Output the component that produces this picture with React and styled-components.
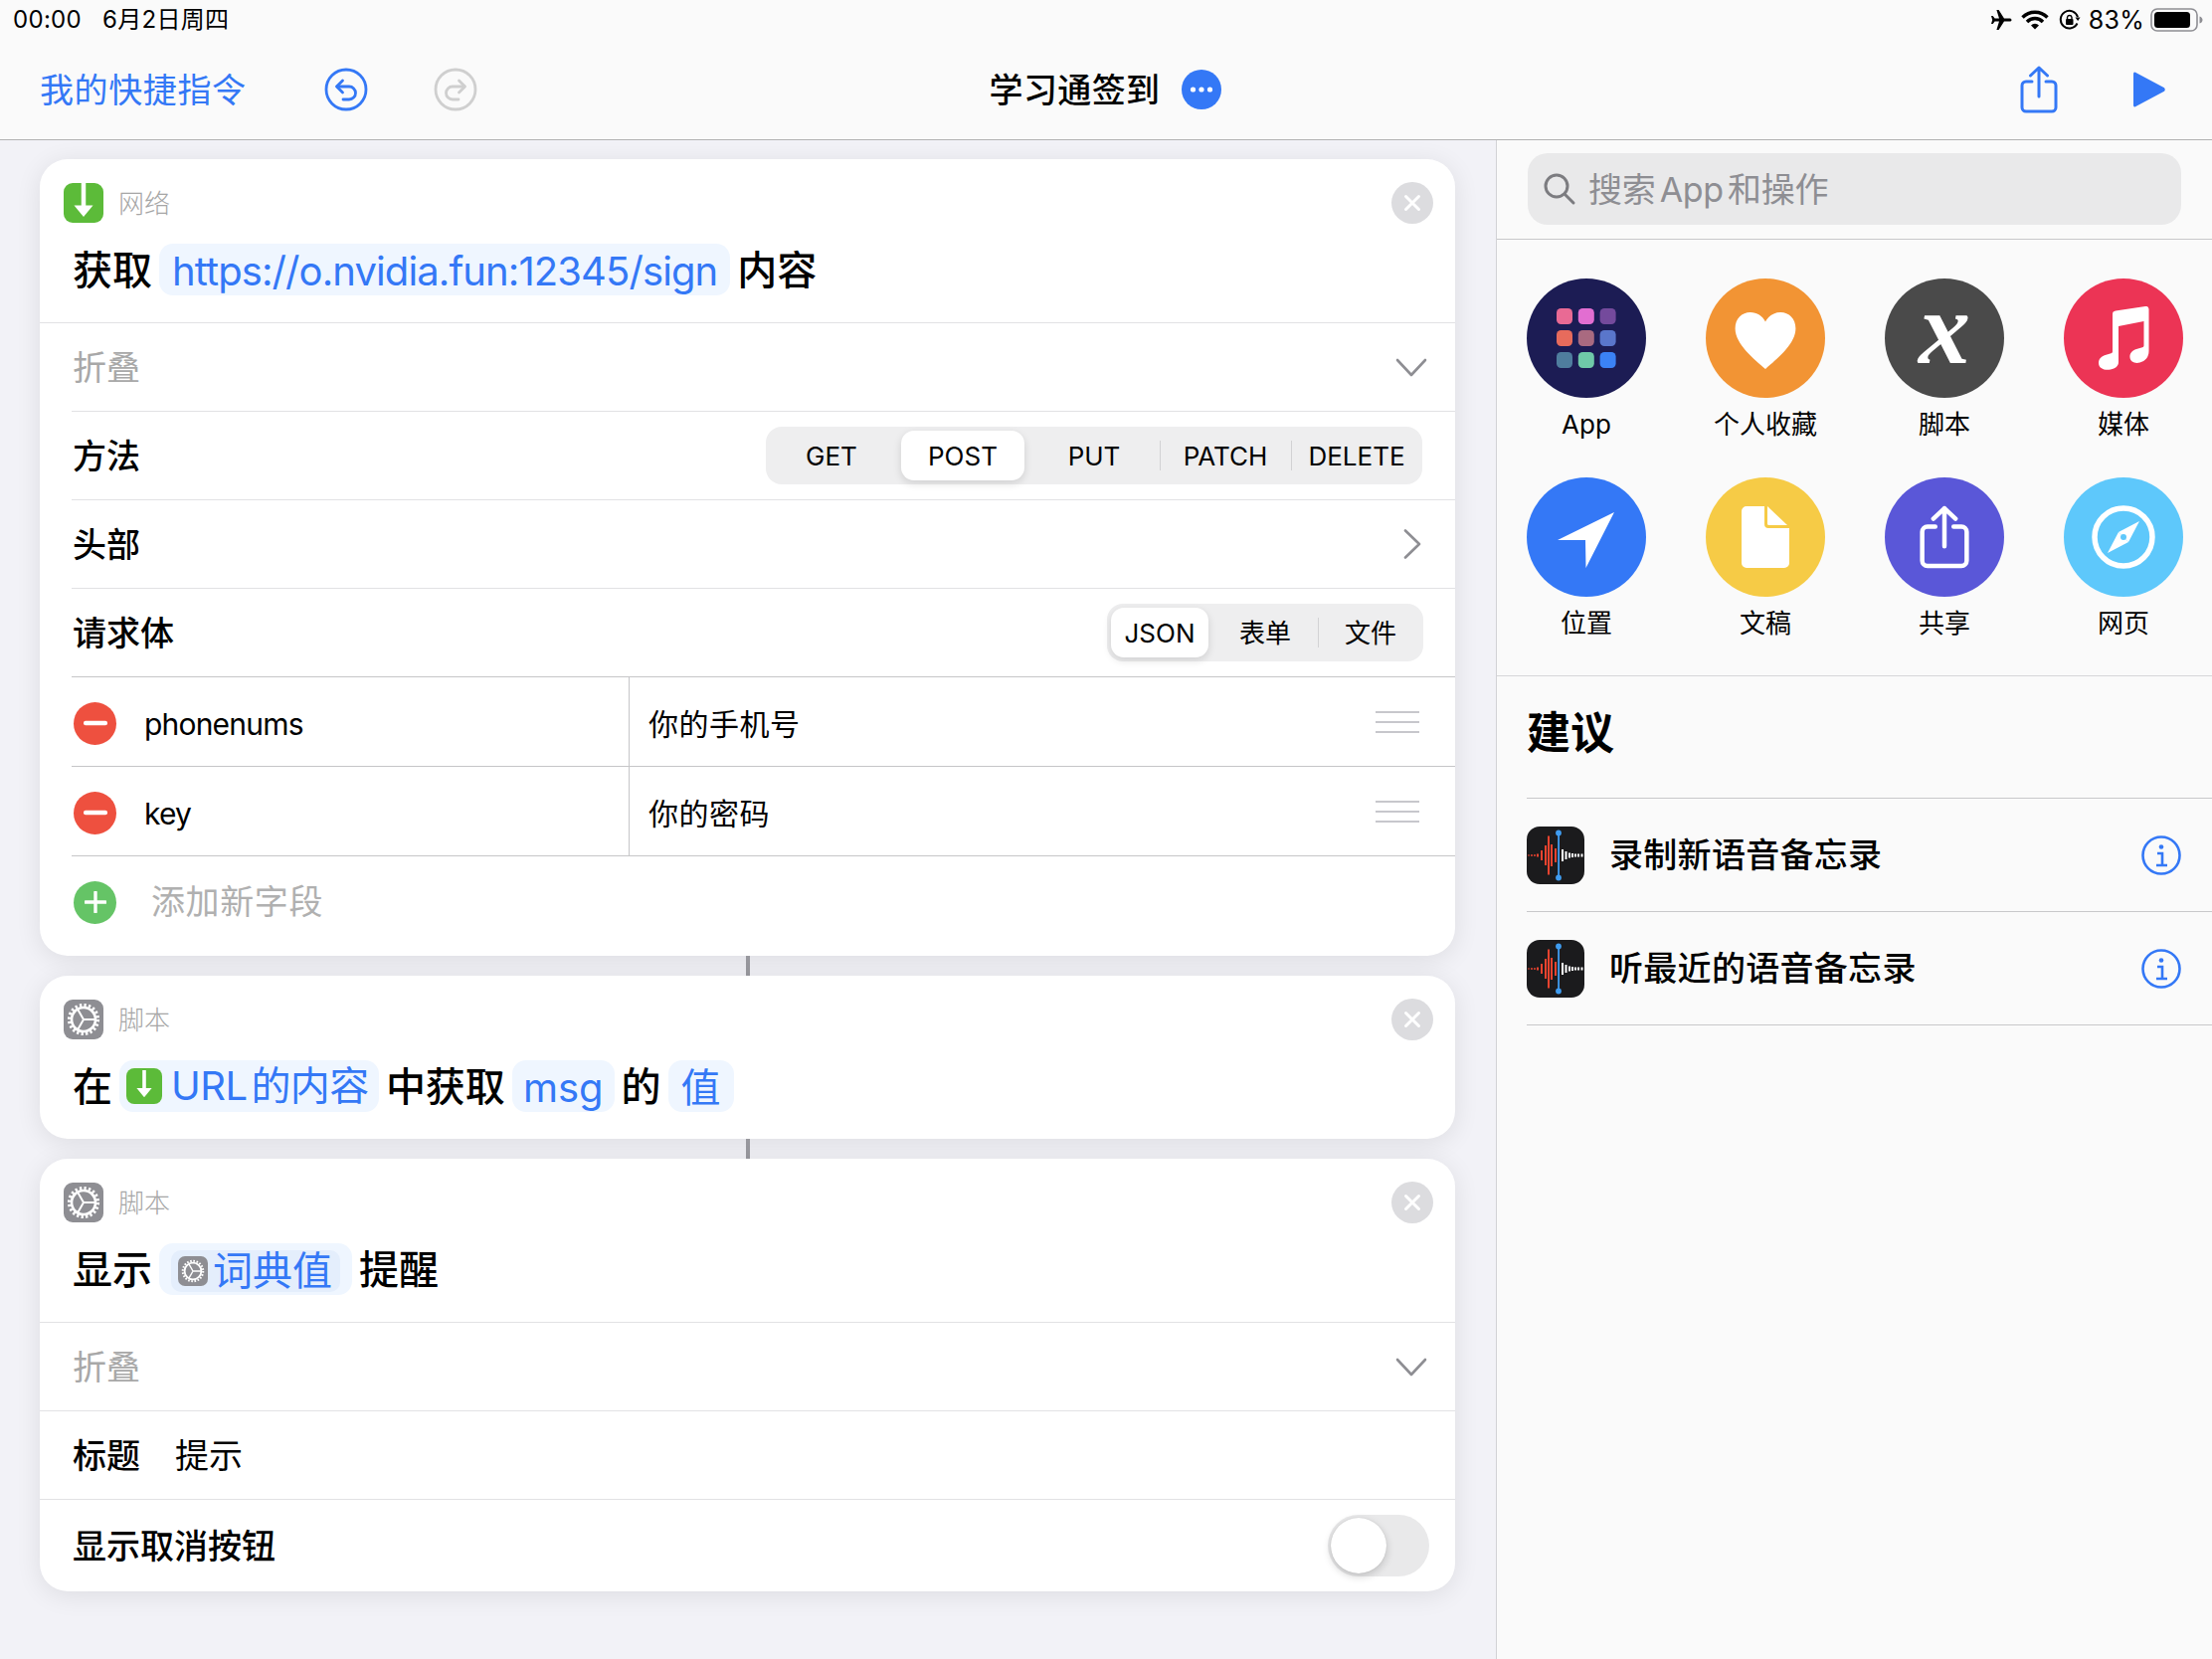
import React from 'react';
import styled, { createGlobalStyle } from 'styled-components';

const BLUE = '#3478f6';

const GlobalStyle = createGlobalStyle`
  html, body {
    margin: 0;
    padding: 0;
    background: #f2f2f7;
  }
  body {
    font-family: Inter, "Noto Sans CJK SC", sans-serif;
    line-height: 1.3;
    color: #000;
  }
  * { box-sizing: border-box; }
`;

const Page = styled.div`
  width: 2224px;
  height: 1668px;
  display: flex;
  flex-direction: column;
  overflow: hidden;
`;

/* top bars */
const Top = styled.header`
  height: 141px;
  background: #fafafa;
  border-bottom: 1px solid #b2b2b2;
  flex-shrink: 0;
`;
const StatusBar = styled.div`
  height: 40px;
  display: flex;
  align-items: center;
  justify-content: space-between;
  padding: 0 8px 0 13px;
  font-size: 24px;
  letter-spacing: 0.3px;
`;
const StatusLeft = styled.div`
  display: flex;
  gap: 21px;
`;
const StatusRight = styled.div`
  display: flex;
  align-items: center;
`;
const Battery = styled.span`
  font-size: 25px;
`;
const NavBar = styled.div`
  height: 100px;
  display: grid;
  grid-template-columns: 1fr auto 1fr;
  align-items: center;
  padding: 0 47px 0 40px;
`;
const NavLeft = styled.div`
  display: flex;
  align-items: center;
`;
const BackLink = styled.span`
  font-size: 34px;
  letter-spacing: 0.6px;
  color: ${BLUE};
  margin-right: 78px;
  padding-top: 2px;
`;
const NavCenter = styled.div`
  display: flex;
  align-items: center;
  gap: 21px;
  margin-left: 5px;
  font-size: 34px;
  font-weight: 500;
  letter-spacing: 0.4px;
`;
const NavTitle = styled.span`
  padding-top: 2px;
`;
const NavRight = styled.div`
  display: flex;
  align-items: center;
  justify-content: flex-end;
  gap: 76px;
`;
const UndoButton = styled.svg`
  width: 44px;
  height: 44px;
  margin-right: ${({ $gap }) => $gap || 0}px;
  flex-shrink: 0;
`;

/* main */
const Main = styled.div`
  flex: 1;
  display: flex;
  min-height: 0;
`;
const Editor = styled.section`
  width: 1504px;
  padding: 19px 41px 0 40px;
  display: flex;
  flex-direction: column;
  background: #f2f2f7;
`;
const Card = styled.div`
  background: #fff;
  border-radius: 28px;
  box-shadow: 0 4px 26px rgba(0, 0, 0, 0.09);
  overflow: hidden;
  flex-shrink: 0;
`;
const Connector = styled.div`
  width: 4px;
  height: 20px;
  margin: 0 auto;
  background: #98989e;
`;
const CardHead = styled.div`
  display: flex;
  align-items: center;
  height: 64px;
  padding: 24px 22px 0 24px;
`;
const CategoryIcon = styled.div`
  width: 40px;
  height: 40px;
  flex-shrink: 0;
  border-radius: 9px;
  background: ${({ $bg }) => $bg};
  display: flex;
  align-items: center;
  justify-content: center;
`;
const CategoryName = styled.span`
  font-size: 26px;
  color: #a6a6a6;
  margin-left: 15px;
  padding-top: 2px;
  flex: 1;
  font-weight: 300;
`;
const CloseButton = styled.div`
  width: 42px;
  height: 42px;
  margin: -1px 0;
  border-radius: 50%;
  background: #dcdcdf;
  display: flex;
  align-items: center;
  justify-content: center;
`;
const Sentence = styled.div`
  height: 100px;
  display: flex;
  align-items: flex-start;
  gap: 7px;
  padding: 21px 0 0 33px;
  font-size: 40px;
  line-height: 52px;
  font-weight: 500;
`;
const Word = styled.span`
  padding-top: 1px;
`;
const Chip = styled.span`
  display: inline-flex;
  align-items: center;
  height: 52px;
  padding: 3px ${({ $pad }) => $pad ?? 13}px 0;
  border-radius: 14px;
  background: #eff6ff;
  color: ${BLUE};
  font-weight: 400;
  letter-spacing: ${({ $tight }) => ($tight ? '-0.9px' : '0')};
  gap: 9px;
`;
const IconChip = styled(Chip)`
  padding: 0 10px 0 7px;
  word-spacing: -7px;
  letter-spacing: -0.5px;
`;
const InnerChip = styled.span`
  display: inline-flex;
  align-items: center;
  height: 42px;
  padding: 0 8px 0 7px;
  gap: 5px;
  border-radius: 10px;
  background: #e4eefc;
`;
const InlineIcon = styled.span`
  width: ${({ $size }) => $size}px;
  height: ${({ $size }) => $size}px;
  border-radius: ${({ $size }) => Math.round($size / 4.4)}px;
  background: ${({ $bg }) => $bg};
  display: flex;
  align-items: center;
  justify-content: center;
  flex-shrink: 0;
`;
const Row = styled.div`
  height: ${({ $h }) => $h || 89}px;
  margin-left: ${({ $inset }) => ($inset ? 32 : 0)}px;
  padding-left: ${({ $inset }) => ($inset ? 1 : 33)}px;
  padding-right: ${({ $pr }) => $pr ?? 28}px;
  border-top: 1px solid #e2e2e4;
  display: flex;
  align-items: center;
  justify-content: space-between;
  font-size: 34px;
`;
const Muted = styled.span`
  color: #a8a8a8;
  margin-top: 3px;
`;
const RowLabel = styled.span`
  font-weight: 500;
  margin-top: 3px;
`;
const TitleValue = styled.span`
  margin: 3px 0 0 35px;
  font-weight: 400;
`;
const Group = styled.div`
  display: flex;
  align-items: center;
`;
const ChevronBox = styled.span`
  display: flex;
  margin-top: 2px;
`;
const Segmented = styled.div`
  display: flex;
  height: 58px;
  border-radius: 16px;
  background: #eeeeef;
  font-size: 26px;
`;
const Segment = styled.div`
  position: relative;
  width: ${({ $w }) => $w}px;
  padding-top: 1px;
  display: flex;
  align-items: center;
  justify-content: center;
  &::before {
    content: '';
    display: ${({ $divider }) => ($divider ? 'block' : 'none')};
    position: absolute;
    left: 0;
    top: 14px;
    bottom: 14px;
    width: 1px;
    background: #d2d2d4;
  }
`;
const ActiveSegment = styled(Segment)`
  background: #fff;
  border-radius: 13px;
  margin: 4px;
  width: ${({ $w }) => $w - 8}px;
  box-shadow: 0 3px 8px rgba(0, 0, 0, 0.13);
`;
const FieldRow = styled.div`
  height: 90px;
  margin-left: 32px;
  border-top: 1px solid #c6c6c8;
  display: flex;
  font-size: 30px;
`;
const FieldKey = styled.div`
  width: 560px;
  padding: 3px 0 0 2px;
  display: flex;
  align-items: center;
  gap: 28px;
  flex-shrink: 0;
`;
const KeyText = styled.span`
  letter-spacing: -0.8px;
  margin-top: 2px;
`;
const FieldValue = styled.div`
  flex: 1;
  border-left: 1px solid #c6c6c8;
  padding: 0 36px 0 19px;
  display: flex;
  align-items: center;
  justify-content: space-between;
`;
const ValueText = styled.span`
  letter-spacing: 0.5px;
  margin-top: 5px;
`;
const RoundIcon = styled.span`
  width: 43px;
  height: 43px;
  border-radius: 50%;
  background: ${({ $bg }) => $bg};
  display: flex;
  align-items: center;
  justify-content: center;
  flex-shrink: 0;
`;
const Handle = styled.span`
  width: 44px;
  height: 22px;
  display: flex;
  flex-direction: column;
  justify-content: space-between;
  span {
    height: 2px;
    background: #c7c7cc;
  }
`;
const AddRow = styled.div`
  height: 101px;
  margin-left: 32px;
  padding: 25px 0 33px 2px;
  border-top: 1px solid #c6c6c8;
  display: flex;
  align-items: center;
  gap: 35px;
  font-size: 34px;
  letter-spacing: 0.6px;
  color: #b0b0b0;
`;
const Toggle = styled.div`
  width: 102px;
  height: 62px;
  border-radius: 31px;
  background: #e9e9ea;
  padding: 3px;
  margin-right: -2px;
`;
const Knob = styled.div`
  width: 56px;
  height: 56px;
  border-radius: 50%;
  background: #fff;
  box-shadow: 0 3px 8px rgba(0, 0, 0, 0.18), 0 0 1px rgba(0, 0, 0, 0.2);
`;

/* sidebar */
const Sidebar = styled.aside`
  flex: 1;
  background: #fafafa;
  border-left: 1px solid #d2d2d6;
  display: flex;
  flex-direction: column;
`;
const SearchSection = styled.div`
  height: 100px;
  padding: 13px 31px 0 31px;
  border-bottom: 1px solid #c8c8ca;
`;
const SearchField = styled.div`
  height: 72px;
  border-radius: 20px;
  background: #e9e9ea;
  display: flex;
  align-items: center;
  gap: 11px;
  padding-left: 14px;
  font-size: 34px;
  word-spacing: -5px;
  letter-spacing: -0.3px;
  color: #8e8e93;
`;
const SearchText = styled.span`
  padding-top: 2px;
`;
const IconGrid = styled.div`
  height: 439px;
  padding: 39px 0 0 30px;
  display: grid;
  grid-template-columns: repeat(4, 120px);
  grid-auto-rows: 200px;
  column-gap: 60px;
  border-bottom: 1px solid #d6d6d8;
`;
const Tile = styled.div`
  display: flex;
  flex-direction: column;
  align-items: center;
  font-size: 26px;
  gap: 10px;
`;
const TileCircle = styled.div`
  width: 120px;
  height: 120px;
  border-radius: 50%;
  background: ${({ $bg }) => $bg};
  display: flex;
  align-items: center;
  justify-content: center;
  flex-shrink: 0;
`;
const ScriptX = styled.span`
  font-family: "Liberation Serif", serif;
  font-style: italic;
  font-weight: 700;
  font-size: 104px;
  line-height: 1;
  color: #fff;
  margin-top: -20px;
`;
const TileGlyph = styled.svg`
  margin-top: ${({ $dy }) => $dy || 0}px;
`;
const SectionTitle = styled.h2`
  margin: 0;
  height: 122px;
  padding: 29px 0 0 30px;
  font-size: 44px;
  line-height: 56px;
  font-weight: 700;
`;
const SuggestList = styled.div`
  margin-left: 30px;
  border-bottom: 1px solid #c8c8ca;
`;
const SuggestRow = styled.div`
  height: 114px;
  border-top: 1px solid #c8c8ca;
  display: flex;
  align-items: center;
  padding-right: 31px;
  font-size: 34px;
  font-weight: 500;
`;
const SuggestText = styled.span`
  flex: 1;
  margin: 2px 0 0 25px;
  letter-spacing: 0.3px;
`;

/* drawings */
const DownloadGlyph = ({ size = 40 }) => (
  <svg width={size} height={size} viewBox="0 0 40 40">
    <path d="M20 0v30" stroke="#fff" strokeWidth="4.5" />
    <path d="M10.5 22.5h19L20 34z" fill="#fff" />
  </svg>
);

const GearGlyph = ({ size = 40 }) => (
  <svg width={size} height={size} viewBox="0 0 40 40" fill="none" stroke="#fff">
    <circle cx="20" cy="20" r="12" strokeWidth="2.6" />
    <circle cx="20" cy="20" r="14.6" strokeWidth="3" strokeDasharray="2.3 2.29" />
    <path d="M20 20h12M20 20l-6 -10.4M20 20l-6 10.4" strokeWidth="2" />
  </svg>
);

const CloseGlyph = () => (
  <svg width="20" height="20" viewBox="0 0 20 20">
    <path d="M3.5 3.5l13 13M16.5 3.5l-13 13" stroke="#fff" strokeWidth="3" strokeLinecap="round" />
  </svg>
);

const Chevron = ({ dir }) =>
  dir === 'down' ? (
    <ChevronBox>
      <svg width="32" height="20" viewBox="0 0 32 20" fill="none">
        <path d="M2 2l14 15L30 2" stroke="#8e8e93" strokeWidth="2.6" strokeLinecap="round" strokeLinejoin="round" />
      </svg>
    </ChevronBox>
  ) : (
    <svg width="20" height="30" viewBox="0 0 20 30" fill="none">
      <path d="M3 1.5L17 15 3 28.5" stroke="#8e8e93" strokeWidth="2.6" strokeLinecap="round" strokeLinejoin="round" />
    </svg>
  );

const MinusGlyph = () => (
  <svg width="24" height="6" viewBox="0 0 24 6">
    <rect width="24" height="4.5" y="0.7" rx="2" fill="#fff" />
  </svg>
);

const PlusGlyph = () => (
  <svg width="22" height="22" viewBox="0 0 22 22">
    <path d="M11 1v20M1 11h20" stroke="#fff" strokeWidth="3.4" strokeLinecap="round" />
  </svg>
);

const ShareGlyph = ({ color, w = 38, h = 48, sw = 3 }) => (
  <svg width={w} height={h} viewBox="0 0 38 48" fill="none" stroke={color} strokeWidth={sw} strokeLinecap="round" strokeLinejoin="round">
    <path d="M19 2v29M10.5 10L19 2l8.5 8" />
    <path d="M12 16H6a4 4 0 0 0-4 4v22a4 4 0 0 0 4 4h26a4 4 0 0 0 4-4V20a4 4 0 0 0-4-4h-6" />
  </svg>
);

const VoiceMemoIcon = () => {
  const red = [[1, 1], [4, 1.5], [7, 1.5], [10, 3], [14, 10], [18, 20], [21, 39], [24, 22], [28, 14]];
  const white = [[35, 12], [38.5, 8], [42, 5], [45, 4], [48, 3], [51, 3], [54.5, 3]];
  return (
    <svg width="58" height="58" viewBox="0 0 58 58">
      <rect width="58" height="58" rx="13" fill="#1b1b1d" />
      {red.map(([x, h]) => (
        <rect key={x} x={x} y={29 - h / 2} width="2" height={h} fill="#e8432f" />
      ))}
      {white.map(([x, h]) => (
        <rect key={x} x={x} y={29 - h / 2} width="2" height={h} fill="#fff" />
      ))}
      <rect x="31.2" y="6" width="1.8" height="46" fill="#3f9cf0" />
      <circle cx="32" cy="6.5" r="2.9" fill="#3f9cf0" />
      <circle cx="32" cy="51.5" r="2.9" fill="#3f9cf0" />
    </svg>
  );
};

const InfoGlyph = () => (
  <svg width="40" height="40" viewBox="0 0 40 40" fill="none" stroke={BLUE}>
    <circle cx="20" cy="20" r="18.5" strokeWidth="2.6" />
    <circle cx="20" cy="11.5" r="2.3" fill={BLUE} stroke="none" />
    <path d="M16 18h5v12M15 30h11" strokeWidth="2.6" />
  </svg>
);

const AppGrid = () => {
  const colors = ['#e96a94', '#e26ed1', '#744a9c', '#e76b5c', '#a96a80', '#5a76cb', '#4f7d9e', '#6fc9a8', '#3b82f6'];
  return (
    <svg width="60" height="60" viewBox="0 0 60 60">
      {colors.map((c, i) => (
        <rect key={c} x={(i % 3) * 21.8} y={Math.floor(i / 3) * 22} width="16" height="16" rx="4.5" fill={c} />
      ))}
    </svg>
  );
};

const App = () => (
  <Page>
    <GlobalStyle />
    <Top>
      <StatusBar>
        <StatusLeft>
          <span>00:00</span>
          <span>6月2日周四</span>
        </StatusLeft>
        <StatusRight>
          <svg width="22" height="22" viewBox="0 0 22 22" style={{ marginRight: 9 }}>
            <path d="M21.5 11c0-1-1-1.6-2-1.6H14L8.6 1H6.4L9 9.4H4.6L2.7 7H1l1.2 4L1 15h1.7l1.9-2.4H9L6.4 21h2.2l5.4-8.4h5.5c1 0 2-.6 2-1.6z" fill="#000" />
          </svg>
          <svg width="28" height="20" viewBox="0 0 28 20" style={{ marginRight: 10 }} fill="none" stroke="#000" strokeWidth="3.4">
            <path d="M1.5 7.5a17.5 17.5 0 0 1 25 0" />
            <path d="M6 12a11 11 0 0 1 16 0" />
            <path d="M14 19.5l-4-4a5.6 5.6 0 0 1 8 0z" fill="#000" stroke="none" />
          </svg>
          <svg width="22" height="22" viewBox="0 0 22 22" style={{ marginRight: 8 }} fill="none" stroke="#000" strokeWidth="2">
            <path d="M18.5 14.5A8.8 8.8 0 1 1 19 8" />
            <path d="M21.5 8.5h-5l2.6 3.4z" fill="#000" stroke="none" />
            <rect x="7" y="10" width="7.5" height="6" rx="1" fill="#000" stroke="none" />
            <path d="M8.5 10V8.3a2.3 2.3 0 0 1 4.5 0V10" strokeWidth="1.4" />
          </svg>
          <Battery>83%</Battery>
          <svg width="54" height="26" viewBox="0 0 54 26" style={{ marginLeft: 6 }}>
            <rect x="1" y="2" width="46" height="22" rx="6" fill="none" stroke="#8e8e93" strokeWidth="1.6" />
            <rect x="4" y="5" width="36" height="16" rx="3.5" fill="#000" />
            <path d="M49.5 9.5c2 .5 3 2 3 3.500s-1 3-3 3.500z" fill="#8e8e93" />
          </svg>
        </StatusRight>
      </StatusBar>
      <NavBar>
        <NavLeft>
          <BackLink>我的快捷指令</BackLink>
          <UndoButton $gap={66} viewBox="0 0 44 44" fill="none" stroke={BLUE} strokeWidth="2.8" strokeLinecap="round" strokeLinejoin="round">
            <circle cx="22" cy="22" r="20" />
            <path d="M18.5 13l-6 6 6 6" />
            <path d="M13 19h12a6.5 6.5 0 0 1 0 13h-6" />
          </UndoButton>
          <UndoButton viewBox="0 0 44 44" fill="none" stroke="#cfcfcf" strokeWidth="2.8" strokeLinecap="round" strokeLinejoin="round">
            <circle cx="22" cy="22" r="20" />
            <path d="M25.5 13l6 6-6 6" />
            <path d="M31 19H19a6.5 6.5 0 0 0 0 13h6" />
          </UndoButton>
        </NavLeft>
        <NavCenter>
          <NavTitle>学习通签到</NavTitle>
          <svg width="40" height="40" viewBox="0 0 40 40">
            <circle cx="20" cy="20" r="20" fill={BLUE} />
            <circle cx="11.5" cy="20" r="2.6" fill="#fff" />
            <circle cx="20" cy="20" r="2.6" fill="#fff" />
            <circle cx="28.5" cy="20" r="2.6" fill="#fff" />
          </svg>
        </NavCenter>
        <NavRight>
          <ShareGlyph color={BLUE} />
          <svg width="32" height="36" viewBox="0 0 32 36">
            <path d="M2 0.8L31 16.2q1.5 1.8 0 3.6L2 35.2Q0 36 0 33.5V2.500Q0 0 2 0.8z" fill={BLUE} />
          </svg>
        </NavRight>
      </NavBar>
    </Top>
    <Main>
      <Editor>
        <Card>
          <CardHead>
            <CategoryIcon $bg="#5cbb39"><DownloadGlyph /></CategoryIcon>
            <CategoryName>网络</CategoryName>
            <CloseButton><CloseGlyph /></CloseButton>
          </CardHead>
          <Sentence>
            <Word>获取</Word>
            <Chip $tight>https://o.nvidia.fun:12345/sign</Chip>
            <Word>内容</Word>
          </Sentence>
          <Row>
            <Muted>折叠</Muted>
            <Chevron dir="down" />
          </Row>
          <Row $inset $pr={33}>
            <RowLabel>方法</RowLabel>
            <Segmented>
              <Segment $w={132}>GET</Segment>
              <ActiveSegment $w={132}>POST</ActiveSegment>
              <Segment $w={132}>PUT</Segment>
              <Segment $w={132} $divider>PATCH</Segment>
              <Segment $w={132} $divider>DELETE</Segment>
            </Segmented>
          </Row>
          <Row $inset $pr={33}>
            <RowLabel>头部</RowLabel>
            <Chevron dir="right" />
          </Row>
          <Row $inset $pr={32}>
            <RowLabel>请求体</RowLabel>
            <Segmented>
              <ActiveSegment $w={106}>JSON</ActiveSegment>
              <Segment $w={106}>表单</Segment>
              <Segment $w={106} $divider>文件</Segment>
            </Segmented>
          </Row>
          <FieldRow>
            <FieldKey>
              <RoundIcon $bg="#ee503f"><MinusGlyph /></RoundIcon>
              <KeyText>phonenums</KeyText>
            </FieldKey>
            <FieldValue>
              <ValueText>你的手机号</ValueText>
              <Handle><span /><span /><span /></Handle>
            </FieldValue>
          </FieldRow>
          <FieldRow>
            <FieldKey>
              <RoundIcon $bg="#ee503f"><MinusGlyph /></RoundIcon>
              <KeyText>key</KeyText>
            </FieldKey>
            <FieldValue>
              <ValueText>你的密码</ValueText>
              <Handle><span /><span /><span /></Handle>
            </FieldValue>
          </FieldRow>
          <AddRow>
            <RoundIcon $bg="#65c466"><PlusGlyph /></RoundIcon>
            <span>添加新字段</span>
          </AddRow>
        </Card>
        <Connector />
        <Card>
          <CardHead>
            <CategoryIcon $bg="#8e8e93"><GearGlyph /></CategoryIcon>
            <CategoryName>脚本</CategoryName>
            <CloseButton><CloseGlyph /></CloseButton>
          </CardHead>
          <Sentence>
            <Word>在</Word>
            <IconChip>
              <InlineIcon $size={36} $bg="#5cbb39"><DownloadGlyph size={32} /></InlineIcon>
              <span>URL 的内容</span>
            </IconChip>
            <Word>中获取</Word>
            <Chip $pad={11}>msg</Chip>
            <Word>的</Word>
            <Chip>值</Chip>
          </Sentence>
        </Card>
        <Connector />
        <Card>
          <CardHead>
            <CategoryIcon $bg="#8e8e93"><GearGlyph /></CategoryIcon>
            <CategoryName>脚本</CategoryName>
            <CloseButton><CloseGlyph /></CloseButton>
          </CardHead>
          <Sentence>
            <Word>显示</Word>
            <Chip $pad={12}>
              <InnerChip>
                <InlineIcon $size={30} $bg="#8e8e93"><GearGlyph size={28} /></InlineIcon>
                <span>词典值</span>
              </InnerChip>
            </Chip>
            <Word>提醒</Word>
          </Sentence>
          <Row>
            <Muted>折叠</Muted>
            <Chevron dir="down" />
          </Row>
          <Row>
            <Group>
              <RowLabel>标题</RowLabel>
              <TitleValue>提示</TitleValue>
            </Group>
          </Row>
          <Row $h={93}>
            <RowLabel>显示取消按钮</RowLabel>
            <Toggle><Knob /></Toggle>
          </Row>
        </Card>
      </Editor>
      <Sidebar>
        <SearchSection>
          <SearchField>
            <svg width="36" height="36" viewBox="0 0 36 36" fill="none" stroke="#7c7c80" strokeWidth="3" strokeLinecap="round">
              <circle cx="15" cy="15" r="11" />
              <path d="M23 23l9 9" />
            </svg>
            <SearchText>搜索 App 和操作</SearchText>
          </SearchField>
        </SearchSection>
        <IconGrid>
          <Tile>
            <TileCircle $bg="#1c1c54"><AppGrid /></TileCircle>
            <span>App</span>
          </Tile>
          <Tile>
            <TileCircle $bg="#f29434">
              <TileGlyph $dy={4} width="64" height="57" viewBox="0 0 66 60">
                <path d="M33 60C22 50 1 34 1 17 1 7 8 0 17 0c7 0 13 4 16 10C36 4 42 0 49 0c9 0 16 7 16 17 0 17-21 33-32 43z" fill="#fff" />
              </TileGlyph>
            </TileCircle>
            <span>个人收藏</span>
          </Tile>
          <Tile>
            <TileCircle $bg="#4a4a4a"><ScriptX>x</ScriptX></TileCircle>
            <span>脚本</span>
          </Tile>
          <Tile>
            <TileCircle $bg="#ec3455">
              <svg width="52" height="64" viewBox="0 0 52 64">
                <path d="M15 8c0-2 1-3 3-3.4L48 0c2-.3 3.5 1 3.5 3v42c0 6-3.5 10-9 11.5-5 1.4-9.5-.8-10-5-.5-4 2-7 6.5-8.5l6-1.8c1-.3 1.5-1 1.5-2V15L21 20v36c0 4-3 6.5-8 7.5-6 1.2-12-1-12-6.5 0-4.5 3-7 7.5-8.3l5-1.5c1-.3 1.5-1 1.5-2z" fill="#fff" />
              </svg>
            </TileCircle>
            <span>媒体</span>
          </Tile>
          <Tile>
            <TileCircle $bg="#3478f6">
              <TileGlyph $dy={8} width="58" height="58" viewBox="0 0 58 58">
                <path d="M57 0L28.5 56 28 28H0z" fill="#fff" />
              </TileGlyph>
            </TileCircle>
            <span>位置</span>
          </Tile>
          <Tile>
            <TileCircle $bg="#f6cb46">
              <svg width="48" height="62" viewBox="0 0 48 62">
                <path d="M5 0h18v18a4 4 0 0 0 4 4h21v35a5 5 0 0 1-5 5H5a5 5 0 0 1-5-5V5a5 5 0 0 1 5-5z" fill="#fff" />
                <path d="M26 0l20 19H27.5A1.5 1.5 0 0 1 26 17.5z" fill="#fff" />
              </svg>
            </TileCircle>
            <span>文稿</span>
          </Tile>
          <Tile>
            <TileCircle $bg="#5a57d8">
              <ShareGlyph color="#fff" w={50} h={64} sw={3.4} />
            </TileCircle>
            <span>共享</span>
          </Tile>
          <Tile>
            <TileCircle $bg="#5ec8fb">
              <svg width="64" height="64" viewBox="0 0 64 64" fill="none">
                <circle cx="32" cy="32" r="29" stroke="#fff" strokeWidth="5.5" />
                <path d="M48 16L37 37 27 27z" fill="#fff" />
                <path d="M16 48l11-21 10 10z" fill="#fff" />
                <circle cx="32" cy="32" r="3" fill="#5ec8fb" />
              </svg>
            </TileCircle>
            <span>网页</span>
          </Tile>
        </IconGrid>
        <SectionTitle>建议</SectionTitle>
        <SuggestList>
          <SuggestRow>
            <VoiceMemoIcon />
            <SuggestText>录制新语音备忘录</SuggestText>
            <InfoGlyph />
          </SuggestRow>
          <SuggestRow>
            <VoiceMemoIcon />
            <SuggestText>听最近的语音备忘录</SuggestText>
            <InfoGlyph />
          </SuggestRow>
        </SuggestList>
      </Sidebar>
    </Main>
  </Page>
);

export default App;
